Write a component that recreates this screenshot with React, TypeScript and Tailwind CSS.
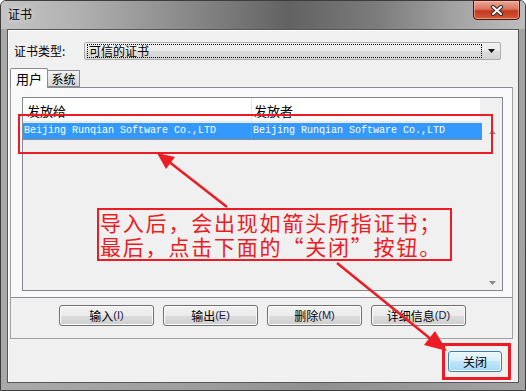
import React from 'react'

const RED = '#ed1c24'

function CloseX() {
  return (
    <svg width="14" height="11" viewBox="0 0 14 11">
      <path d="M3 2 L11 9 M11 2 L3 9" stroke="#2b2b2b" strokeWidth="4.2" strokeLinecap="round" fill="none" />
      <path d="M3 2 L11 9 M11 2 L3 9" stroke="#f4f4f4" strokeWidth="2.2" strokeLinecap="round" fill="none" />
    </svg>
  )
}

function WinButton({ label, hot }: { label: string; hot?: string }) {
  return (
    <button className="w-[95px] h-[21px] flex items-center justify-center rounded-[3px] border border-[#707070] bg-[linear-gradient(#f2f2f2_0%,#ebebeb_50%,#dddddd_50%,#cfcfcf_100%)] shadow-[inset_0_0_0_1px_#fbfbfb] text-[12px] leading-none text-black">
      <span>{label}</span>
      {hot && <span className="text-[11px] font-['Liberation_Sans',sans-serif] text-[#1a1a4a]">({hot})</span>}
    </button>
  )
}

function Annotations() {
  return (
    <div className="absolute inset-0 pointer-events-none">
      {/* box round the selected certificate row */}
      <div className="absolute left-[18px] top-[114px] w-[475px] h-[40px] border-2 border-[#ed1c24]" />

      {/* note */}
      <div className="absolute left-[97px] top-[208px] w-[355px] h-[53px] border-2 border-[#ed1c24] text-[#ed1c24] text-[21px] leading-[24px] tracking-[1.8px] whitespace-nowrap pl-px">
        <div>导入后，会出现如箭头所指证书；</div>
        <div>最后，点击下面的“关闭”按钮。</div>
      </div>

      {/* box round the close button */}
      <div className="absolute left-[442px] top-[343px] w-[69px] h-[37px] border-[3px] border-[#ed1c24]" />

      <svg className="absolute inset-0" width="526" height="391">
        <line x1="227" y1="207" x2="168" y2="161" stroke={RED} strokeWidth="2.5" />
        <polygon points="157,153 166,169 175,157" fill={RED} />
        <line x1="337" y1="263" x2="432" y2="340" stroke={RED} strokeWidth="2.5" />
        <polygon points="447,351 435,331 424,345" fill={RED} />
      </svg>
    </div>
  )
}

export default function App() {
  return (
    <div className="relative w-[526px] h-[391px] overflow-hidden bg-white font-['Noto_Sans_CJK_SC',sans-serif] text-[12px] text-black">
      <div className="w-full h-full flex flex-col border border-[#3d3d3d] rounded-t-[6px] bg-[linear-gradient(90deg,#a9a9a9_0%,#9c9c9c_40%,#8f8f8f_60%,#a3a3a3_100%)]">
        {/* Title bar */}
        <div className="h-[28px] flex items-start bg-[linear-gradient(90deg,#c4c4c4_0%,#b0b0b0_15%,#8a8a8a_35%,#626262_55%,#7c7c7c_72%,#a6a6a6_88%,#bdbdbd_100%)] rounded-t-[5px]">
          <span className="ml-[7px] mt-[5px] text-[12px] leading-[16px] [text-shadow:0_0_6px_rgba(255,255,255,0.9)]">证书</span>
          <div className="ml-auto mr-[5px] -mt-px w-[47px] h-[20px] flex items-center justify-center rounded-b-[4px] border border-[#4a1a10] bg-[linear-gradient(#e9a897_0%,#d9745c_45%,#c2391f_55%,#d45a3a_100%)] shadow-[inset_0_0_0_1px_rgba(255,210,200,0.5)]">
            <CloseX />
          </div>
        </div>

        {/* Body with side frames */}
        <div className="flex-1 flex flex-col px-[6px] pb-[7px]">
          <div className="flex-1 flex flex-col bg-[#f0f0f0] border border-[#575757] shadow-[inset_1px_1px_0_#ffffff]">
            {/* 证书类型 row */}
            <div className="flex items-center pl-[6px] pr-[17px] pt-[12px]">
              <span className="w-[70px] leading-[18px]">证书类型:</span>
              <div className="flex-1 h-[18px] flex items-center pl-[2px] rounded-[2px] border border-[#acacac] bg-[linear-gradient(#f2f2f2_0%,#ebebeb_50%,#dddddd_50%,#d4d4d4_100%)]">
                <div className="flex-1 h-[14px] flex items-center pl-px border border-dotted border-black leading-none">可信的证书</div>
                <div className="w-[18px] flex justify-center">
                  <svg width="7" height="4" viewBox="0 0 7 4"><polygon points="0,0 7,0 3.5,4" fill="#111" /></svg>
                </div>
              </div>
            </div>

            {/* Tabs + buttons panel */}
            <div className="mt-[8px] ml-[2px] mr-[5px] flex flex-col">
              <div className="flex items-end h-[19px]">
                <div className="relative z-10 -mb-px w-[38px] h-[20px] flex items-center justify-center border border-b-0 border-[#898c95] bg-[#fcfcfc] rounded-t-[2px] text-[13px]">用户</div>
                <div className="w-[32px] h-[17px] flex items-center justify-center border border-l-0 border-[#898c95] bg-[linear-gradient(#f2f2f2,#d6d6d6)]">系统</div>
              </div>

              <div className="flex flex-col border-x border-b border-[#a0a0a0]">
                {/* tab page */}
                <div className="h-[211px] flex flex-col border-y border-[#898c95] bg-[#f9f9f9] pl-[11px] pr-[9px] pt-[9px] pb-[6px]">
                  <div className="flex-1 flex border border-[#828790] bg-[#f0f0f0]">
                    <div className="flex-1 flex flex-col">
                      <div className="h-[24px] mr-[2px] flex bg-[linear-gradient(#ffffff_0%,#ffffff_50%,#f7f8fa_100%)] border-b border-[#e3e5e7]">
                        <div className="w-[229px] flex items-center pl-[4px] pt-[3px] border-r border-[#e5e5e5] text-[13px]">发放给</div>
                        <div className="flex-1 flex items-center pl-[2px] pt-[3px] text-[13px]">发放者</div>
                      </div>
                      <div className="mt-px h-[17px] flex bg-[#3399ff] border-b border-[#8a8a8a] text-white font-['Liberation_Mono',monospace] text-[10px] leading-none">
                        <div className="w-[229px] flex items-center pl-px border-r border-[#7a9cc0]">Beijing Runqian Software Co.,LTD</div>
                        <div className="flex-1 flex items-center pl-px">Beijing Runqian Software Co.,LTD</div>
                      </div>
                    </div>
                    <div className="w-[20px] flex flex-col items-center justify-between pt-[32px] pb-[5px]">
                      <svg width="7" height="4" viewBox="0 0 7 4"><polygon points="3.5,0 7,4 0,4" fill="#8a8a8a" /></svg>
                      <svg width="7" height="4" viewBox="0 0 7 4"><polygon points="0,0 7,0 3.5,4" fill="#8a8a8a" /></svg>
                    </div>
                  </div>
                </div>

                {/* action buttons */}
                <div className="flex gap-[9px] pl-[48px] pt-[7px] pb-[12px]">
                  <WinButton label="输入" hot="I" />
                  <WinButton label="输出" hot="E" />
                  <WinButton label="删除" hot="M" />
                  <WinButton label="详细信息" hot="D" />
                </div>
              </div>
            </div>

            {/* bottom bar */}
            <div className="flex justify-end pt-[12px] pr-[16px]">
              <button className="w-[54px] h-[21px] flex items-center justify-center rounded-[3px] border border-[#3c7fb1] bg-[linear-gradient(#eaf6fd_0%,#d9f0fc_50%,#bee6fd_50%,#a7d9f5_100%)] shadow-[inset_0_0_0_1px_#f4fbff] text-[12px] leading-none">关闭</button>
            </div>
          </div>
        </div>
      </div>

      <Annotations />
    </div>
  )
}
